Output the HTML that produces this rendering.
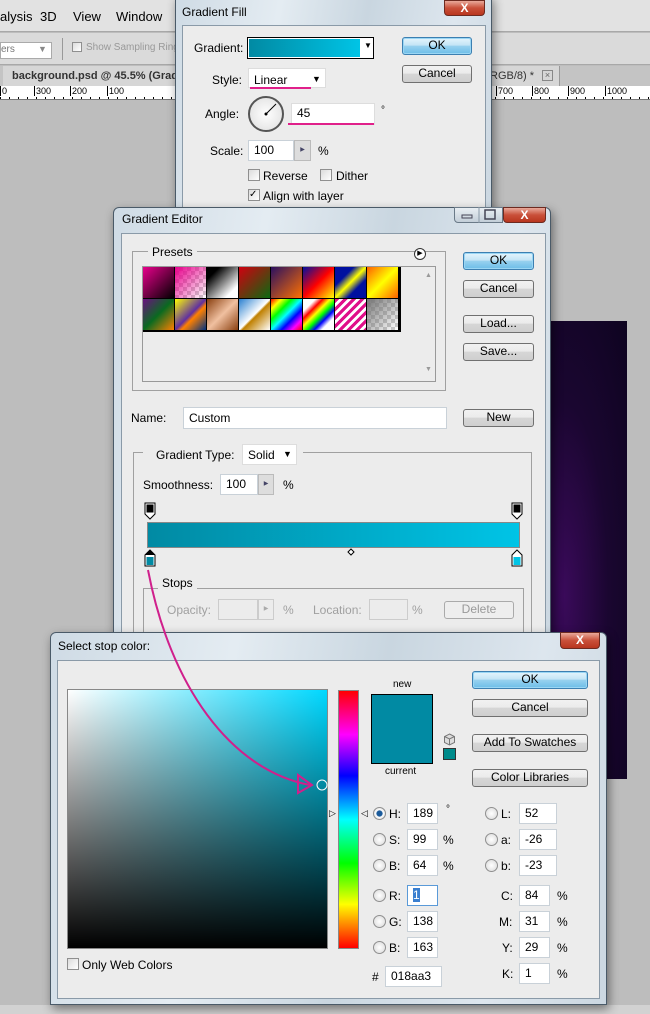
<!DOCTYPE html>
<html><head><meta charset="utf-8"><style>
*{box-sizing:border-box;margin:0;padding:0}
body{width:650px;height:1014px;overflow:hidden;position:relative;background:#bdbdbd;font-family:"Liberation Sans",sans-serif;font-size:12px;color:#000}
.a{position:absolute}
.t{position:absolute;white-space:nowrap}
.frame{position:absolute;background:linear-gradient(100deg,#cfdbe5 0%,#e4ecf2 30%,#c9d6e0 55%,#dde6ee 80%,#cbd7e1 100%);border:1px solid #4a5a68;border-radius:6px 6px 0 0;box-shadow:2px 4px 10px rgba(0,0,0,.45)}
.inner{position:absolute;background:#ececec;border:1px solid #8a9aa8}
.btn{position:absolute;border:1px solid #707070;border-radius:3px;background:linear-gradient(#f2f2f2 0%,#ebebeb 45%,#d6d6d6 50%,#cfcfcf 100%);text-align:center;font-size:12px;line-height:15px}
.ok{border-color:#3c7fb1;background:linear-gradient(#e5f4fc 0%,#c4e5f6 45%,#98d1ef 50%,#6cbde8 100%);box-shadow:0 0 0 1px #9ad6f4 inset}
.inp{position:absolute;background:#fff;border:1px solid #c9d1d8;padding-left:5px;line-height:18px}
.close{position:absolute;background:linear-gradient(#e9a99a,#c9503a 50%,#b8361f);border:1px solid #6d2a20;border-radius:0 0 4px 4px;color:#fff;text-align:center;font-weight:bold;font-size:12px}
.grp{position:absolute;border:1px solid #a0a0a0}
.cb{position:absolute;width:12px;height:12px;border:1px solid #8f8f8f;background:linear-gradient(135deg,#dcdcdc,#fff)}
.rad{position:absolute;width:13px;height:13px;border:1px solid #8f8f8f;border-radius:50%;background:radial-gradient(#fff,#d8d8d8)}
</style></head><body>
<div class="a" style="left:0;top:0;width:650px;height:32px;background:#e2e2e2;border-bottom:1px solid #a8a8a8"></div>
<div class="t" style="left:0;top:9px;font-size:13px">alysis</div>
<div class="t" style="left:40px;top:9px;font-size:13px">3D</div>
<div class="t" style="left:73px;top:9px;font-size:13px">View</div>
<div class="t" style="left:116px;top:9px;font-size:13px">Window</div>
<div class="a" style="left:0;top:33px;width:650px;height:32px;background:#dadada;border-bottom:1px solid #a8a8a8"></div>
<div class="a" style="left:0;top:42px;width:52px;height:17px;background:#fff;border:1px solid #aaa"></div>
<div class="t" style="left:1px;top:44px;font-size:10px;color:#777">ers</div>
<div class="t" style="left:38px;top:44px;font-size:9px;color:#888">▼</div>
<div class="a" style="left:62px;top:38px;width:1px;height:22px;background:#999"></div>
<div class="cb" style="left:72px;top:42px;width:10px;height:10px"></div>
<div class="t" style="left:86px;top:42px;font-size:10px;color:#999">Show Sampling Ring</div>
<div class="a" style="left:0;top:66px;width:650px;height:20px;background:#c4c4c4"></div>
<div class="a" style="left:3px;top:66px;width:557px;height:20px;background:#d6d6d6;border-right:1px solid #999"></div>
<div class="t" style="left:12px;top:70px;font-size:11px;font-weight:bold;color:#333">background.psd @ 45.5% (Grad</div>
<div class="t" style="left:490px;top:70px;font-size:11px;color:#333">RGB/8) *</div>
<div class="a" style="left:542px;top:70px;width:11px;height:11px;border:1px solid #888;font-size:9px;line-height:9px;text-align:center;color:#666">×</div>
<div class="a" style="left:0;top:86px;width:650px;height:14px;background:#fff;border-bottom:1px solid #777;background-image:repeating-linear-gradient(90deg,#000 0 1px,transparent 1px 9px);background-size:100% 3px;background-position:0 11px;background-repeat:no-repeat"></div>
<div class="t" style="left:0;top:86px;font-size:9px;border-left:1px solid #000;padding-left:1px">0</div>
<div class="t" style="left:34px;top:86px;font-size:9px;border-left:1px solid #000;padding-left:1px">300</div>
<div class="t" style="left:70px;top:86px;font-size:9px;border-left:1px solid #000;padding-left:1px">200</div>
<div class="t" style="left:107px;top:86px;font-size:9px;border-left:1px solid #000;padding-left:1px">100</div>
<div class="t" style="left:496px;top:86px;font-size:9px;border-left:1px solid #000;padding-left:1px">700</div>
<div class="t" style="left:532px;top:86px;font-size:9px;border-left:1px solid #000;padding-left:1px">800</div>
<div class="t" style="left:568px;top:86px;font-size:9px;border-left:1px solid #000;padding-left:1px">900</div>
<div class="t" style="left:605px;top:86px;font-size:9px;border-left:1px solid #000;padding-left:1px">1000</div>
<div class="a" style="left:537px;top:321px;width:90px;height:458px;background:radial-gradient(ellipse at 30% 60%,#3a0a5a,#1a0630 50%,#0e0420)"></div>
<div class="a" style="left:0;top:1005px;width:650px;height:9px;background:#d2d2d2"></div>

<div class="frame" style="left:175px;top:-6px;width:317px;height:220px"></div>
<div class="t" style="left:182px;top:5px;font-size:12px">Gradient Fill</div>
<div class="close" style="left:444px;top:0;width:41px;height:16px;line-height:14px">X</div>
<div class="inner" style="left:182px;top:25px;width:304px;height:190px"></div>
<div class="t" style="left:194px;top:41px">Gradient:</div>
<div class="a" style="left:247px;top:37px;width:127px;height:22px;border:1px solid #000;background:#fff"></div>
<div class="a" style="left:249px;top:39px;width:111px;height:18px;background:linear-gradient(90deg,#018aa3,#00c4e6)"></div>
<div class="t" style="left:364px;top:41px;font-size:8px">▼</div>
<div class="btn ok" style="left:402px;top:37px;width:70px;height:18px">OK</div>
<div class="btn" style="left:402px;top:65px;width:70px;height:18px">Cancel</div>
<div class="t" style="left:212px;top:73px">Style:</div>
<div class="a" style="left:248px;top:68px;width:78px;height:20px;background:#fff;border:1px solid #ddd"></div>
<div class="t" style="left:254px;top:73px">Linear</div>
<div class="t" style="left:312px;top:74px;font-size:9px">▼</div>
<div class="a" style="left:250px;top:87px;width:61px;height:2px;background:#e0208a"></div>
<div class="t" style="left:205px;top:107px">Angle:</div>
<div class="a" style="left:248px;top:96px;width:36px;height:36px;border-radius:50%;border:2px solid #555;background:radial-gradient(#fff,#ddd)"></div>
<svg class="a" style="left:248px;top:96px" width="36" height="36"><line x1="18" y1="18" x2="28" y2="8" stroke="#000" stroke-width="1"/><circle cx="18" cy="18" r="1.5"/></svg>
<div class="inp" style="left:291px;top:103px;width:84px;height:22px;border:1px solid #ddd">45</div>
<div class="a" style="left:288px;top:123px;width:86px;height:2px;background:#e0208a"></div>
<div class="t" style="left:381px;top:105px;font-size:10px">°</div>
<div class="t" style="left:210px;top:144px">Scale:</div>
<div class="inp" style="left:248px;top:140px;width:46px;height:21px">100</div>
<div class="a" style="left:294px;top:140px;width:17px;height:21px;border:1px solid #bbb;background:#ddd;font-size:6px;line-height:19px;text-align:center;color:#446">▶</div>
<div class="t" style="left:318px;top:144px">%</div>
<div class="cb" style="left:248px;top:169px"></div><div class="t" style="left:263px;top:169px">Reverse</div>
<div class="cb" style="left:320px;top:169px"></div><div class="t" style="left:336px;top:169px">Dither</div>
<div class="cb" style="left:248px;top:189px;font-size:10px;line-height:10px">✓</div><div class="t" style="left:263px;top:189px">Align with layer</div>

<div class="frame" style="left:113px;top:207px;width:438px;height:440px"></div>
<div class="t" style="left:122px;top:212px">Gradient Editor</div>
<div class="a" style="left:454px;top:207px;width:49px;height:16px;border:1px solid #6a7a88;border-radius:0 0 0 4px;background:linear-gradient(#e8eef3,#c3ced8)"></div>
<svg class="a" style="left:454px;top:207px" width="49" height="16"><rect x="8" y="8" width="10" height="3" fill="none" stroke="#445"/><line x1="25" y1="0" x2="25" y2="16" stroke="#8a9aa8"/><rect x="31" y="3" width="10" height="9" fill="none" stroke="#445" stroke-width="1.5"/></svg>
<div class="close" style="left:503px;top:207px;width:43px;height:16px;line-height:14px">X</div>
<div class="inner" style="left:121px;top:233px;width:425px;height:410px"></div>
<div class="grp" style="left:132px;top:251px;width:314px;height:140px"></div>
<div class="t" style="left:148px;top:245px;background:#ececec;padding:0 4px">Presets</div>
<div class="a" style="left:414px;top:248px;width:12px;height:12px;border:1px solid #333;border-radius:50%;background:#fff;font-size:7px;line-height:10px;text-align:center">▶</div>
<div class="a" style="left:142px;top:266px;width:294px;height:116px;background:#ececec;border:1px solid #999"></div>
<div class="t" style="left:425px;top:272px;font-size:7px;color:#999">▲</div>
<div class="t" style="left:425px;top:366px;font-size:7px;color:#999">▼</div>
<div class="a" style="left:143px;top:267px;width:258px;height:65px;background:#000;display:grid;grid-template-columns:repeat(8,31px);grid-template-rows:31px 31px;gap:1px">
<div style="background:linear-gradient(135deg,#e8008c,#000)"></div>
<div style="background:linear-gradient(135deg,#e8008c,transparent),repeating-conic-gradient(#ccc 0 25%,#fff 0 50%) 0 0/8px 8px"></div>
<div style="background:linear-gradient(135deg,#000 20%,#fff 80%)"></div>
<div style="background:linear-gradient(135deg,#d00010,#0a6a10)"></div>
<div style="background:linear-gradient(135deg,#2a1060,#ff7000)"></div>
<div style="background:linear-gradient(135deg,#0010a0,#f00 50%,#ff0)"></div>
<div style="background:linear-gradient(135deg,#0010a0 30%,#ff0 50%,#0010a0 70%)"></div>
<div style="background:linear-gradient(135deg,#ff6000,#ff0 50%,#ff6000)"></div>
<div style="background:linear-gradient(135deg,#6a1080,#0a6a20 50%,#ff8000)"></div>
<div style="background:linear-gradient(135deg,#ff0,#6030a0 50%,#ff8000 60%,#003080)"></div>
<div style="background:linear-gradient(135deg,#8a4010,#f0c0a0 50%,#8a4010)"></div>
<div style="background:linear-gradient(135deg,#2a80d0,#fff 50%,#c08000 55%,#fff)"></div>
<div style="background:linear-gradient(135deg,#f00,#ff0,#0f0,#0ff,#00f,#f0f,#f00)"></div>
<div style="background:linear-gradient(135deg,#fff 20%,#f00,#ff0,#0f0,#00f,#fff 80%)"></div>
<div style="background:repeating-linear-gradient(135deg,#e0108a 0 3px,#fff 3px 6px)"></div>
<div style="background:linear-gradient(135deg,#777,transparent),repeating-conic-gradient(#ccc 0 25%,#fff 0 50%) 0 0/8px 8px"></div>
</div>
<div class="btn ok" style="left:463px;top:252px;width:71px;height:18px">OK</div>
<div class="btn" style="left:463px;top:280px;width:71px;height:18px">Cancel</div>
<div class="btn" style="left:463px;top:315px;width:71px;height:18px">Load...</div>
<div class="btn" style="left:463px;top:343px;width:71px;height:18px">Save...</div>
<div class="t" style="left:131px;top:411px">Name:</div>
<div class="inp" style="left:183px;top:407px;width:264px;height:22px;line-height:20px">Custom</div>
<div class="btn" style="left:463px;top:409px;width:71px;height:18px">New</div>
<div class="grp" style="left:133px;top:452px;width:399px;height:200px;border-bottom:none"></div>
<div class="a" style="left:143px;top:445px;width:160px;height:20px;background:#ececec"></div>
<div class="t" style="left:156px;top:448px">Gradient Type:</div>
<div class="a" style="left:242px;top:444px;width:55px;height:21px;background:#fff;border:1px solid #ddd"></div>
<div class="t" style="left:248px;top:448px">Solid</div>
<div class="t" style="left:283px;top:449px;font-size:9px">▼</div>
<div class="t" style="left:143px;top:478px">Smoothness:</div>
<div class="inp" style="left:220px;top:474px;width:38px;height:21px">100</div>
<div class="a" style="left:258px;top:474px;width:16px;height:21px;border:1px solid #bbb;background:#ddd;font-size:6px;line-height:19px;text-align:center;color:#446">▶</div>
<div class="t" style="left:283px;top:478px">%</div>
<svg class="a" style="left:140px;top:502px" width="400" height="68">
<path d="M5 1h10v11l-5 5l-5-5z" fill="#fff" stroke="#000"/><rect x="6.5" y="2.5" width="7" height="8" fill="#000"/>
<path d="M372 1h10v11l-5 5l-5-5z" fill="#fff" stroke="#000"/><rect x="373.5" y="2.5" width="7" height="8" fill="#000"/>
<path d="M5 64v-11l5-5l5 5v11z" fill="#fff" stroke="#000"/><path d="M5 53l5-5l5 5z" fill="#000"/><rect x="6.5" y="55" width="7" height="8" fill="#018aa3"/>
<path d="M372 64v-11l5-5l5 5v11z" fill="#fff" stroke="#000"/><rect x="373.5" y="55" width="7" height="8" fill="#00c4e6"/>
<path d="M211 47l3 3l-3 3l-3-3z" fill="#fff" stroke="#000"/>
</svg>
<div class="a" style="left:147px;top:522px;width:373px;height:26px;border:1px solid #888;background:linear-gradient(90deg,#018aa3,#00c4e6)"></div>
<div class="grp" style="left:143px;top:588px;width:381px;height:60px;border-bottom:none"></div>
<div class="t" style="left:158px;top:576px;background:#ececec;padding:0 4px">Stops</div>
<div class="t" style="left:167px;top:603px;color:#a0a0a0">Opacity:</div>
<div class="a" style="left:218px;top:599px;width:40px;height:21px;border:1px solid #ccc"></div>
<div class="a" style="left:258px;top:599px;width:16px;height:21px;border:1px solid #ccc;font-size:6px;line-height:19px;text-align:center;color:#aaa">▶</div>
<div class="t" style="left:283px;top:603px;color:#a0a0a0">%</div>
<div class="t" style="left:313px;top:603px;color:#a0a0a0">Location:</div>
<div class="a" style="left:369px;top:599px;width:39px;height:21px;border:1px solid #ccc"></div>
<div class="t" style="left:412px;top:603px;color:#a0a0a0">%</div>
<div class="btn" style="left:444px;top:601px;width:70px;height:18px;color:#999;border-color:#aaa;background:#eee">Delete</div>

<div class="frame" style="left:50px;top:632px;width:557px;height:373px"></div>
<div class="t" style="left:58px;top:639px">Select stop color:</div>
<div class="close" style="left:560px;top:632px;width:40px;height:17px;line-height:15px">X</div>
<div class="inner" style="left:57px;top:660px;width:543px;height:339px"></div>
<div class="a" style="left:67px;top:689px;width:261px;height:260px;border:1px solid #888;background:linear-gradient(transparent,#000),linear-gradient(90deg,#fff,#00d8ff)"></div>
<div class="a" style="left:338px;top:690px;width:21px;height:259px;border:1px solid #888;background:linear-gradient(#f00,#f0f 17%,#00f 33%,#0ff 50%,#0f0 67%,#ff0 83%,#f00)"></div>
<div class="t" style="left:329px;top:808px;font-size:9px">▷</div>
<div class="t" style="left:361px;top:808px;font-size:9px">◁</div>
<div class="t" style="left:393px;top:679px;font-size:10px">new</div>
<div class="a" style="left:371px;top:694px;width:62px;height:70px;border:1px solid #000;background:#018aa3"></div>
<div class="t" style="left:385px;top:766px;font-size:10px">current</div>
<svg class="a" style="left:443px;top:733px" width="13" height="13"><path d="M6.5 1l5 2.5v6l-5 2.5l-5-2.5v-6z" fill="#ddd" stroke="#777"/><path d="M1.5 3.5l5 2.5l5-2.5M6.5 6v6" fill="none" stroke="#777"/></svg>
<div class="a" style="left:443px;top:748px;width:13px;height:12px;border:1px solid #333;background:#008b8b"></div>
<div class="btn ok" style="left:472px;top:671px;width:116px;height:18px">OK</div>
<div class="btn" style="left:472px;top:699px;width:116px;height:18px">Cancel</div>
<div class="btn" style="left:472px;top:734px;width:116px;height:18px">Add To Swatches</div>
<div class="btn" style="left:472px;top:769px;width:116px;height:18px">Color Libraries</div>
<svg class="a" style="left:50px;top:555px;overflow:visible" width="300" height="240"><path d="M98 15 C 120 130, 180 215, 260 230" fill="none" stroke="#d0208c" stroke-width="2"/><path d="M248 220 L262 230 L248 238 Z" fill="none" stroke="#d0208c" stroke-width="2"/><circle cx="272" cy="230" r="5" fill="none" stroke="#fff" stroke-width="1"/></svg>
<div class="rad" style="left:373px;top:807px;background:radial-gradient(#1a5a9a 35%,#fff 45%,#ccc)"></div>
<div class="t" style="left:389px;top:807px">H:</div><div class="inp" style="left:407px;top:803px;width:31px;height:21px">189</div>
<div class="t" style="left:446px;top:804px;font-size:10px">°</div>
<div class="rad" style="left:373px;top:833px"></div><div class="t" style="left:389px;top:833px">S:</div><div class="inp" style="left:407px;top:829px;width:31px;height:21px">99</div><div class="t" style="left:443px;top:833px">%</div>
<div class="rad" style="left:373px;top:859px"></div><div class="t" style="left:389px;top:859px">B:</div><div class="inp" style="left:407px;top:855px;width:31px;height:21px">64</div><div class="t" style="left:443px;top:859px">%</div>
<div class="rad" style="left:373px;top:889px"></div><div class="t" style="left:389px;top:889px">R:</div><div class="inp" style="left:407px;top:885px;width:31px;height:21px;border-color:#5a9ad8"><span style="background:#3a7fd0;color:#fff">1</span></div>
<div class="rad" style="left:373px;top:915px"></div><div class="t" style="left:389px;top:915px">G:</div><div class="inp" style="left:407px;top:911px;width:31px;height:21px">138</div>
<div class="rad" style="left:373px;top:941px"></div><div class="t" style="left:389px;top:941px">B:</div><div class="inp" style="left:407px;top:937px;width:31px;height:21px">163</div>
<div class="t" style="left:372px;top:970px">#</div><div class="inp" style="left:385px;top:966px;width:57px;height:21px">018aa3</div>
<div class="rad" style="left:485px;top:807px"></div><div class="t" style="left:501px;top:807px">L:</div><div class="inp" style="left:519px;top:803px;width:38px;height:21px">52</div>
<div class="rad" style="left:485px;top:833px"></div><div class="t" style="left:501px;top:833px">a:</div><div class="inp" style="left:519px;top:829px;width:38px;height:21px">-26</div>
<div class="rad" style="left:485px;top:859px"></div><div class="t" style="left:501px;top:859px">b:</div><div class="inp" style="left:519px;top:855px;width:38px;height:21px">-23</div>
<div class="t" style="left:501px;top:889px">C:</div><div class="inp" style="left:519px;top:885px;width:31px;height:21px">84</div><div class="t" style="left:557px;top:889px">%</div>
<div class="t" style="left:499px;top:915px">M:</div><div class="inp" style="left:519px;top:911px;width:31px;height:21px">31</div><div class="t" style="left:557px;top:915px">%</div>
<div class="t" style="left:502px;top:941px">Y:</div><div class="inp" style="left:519px;top:937px;width:31px;height:21px">29</div><div class="t" style="left:557px;top:941px">%</div>
<div class="t" style="left:502px;top:967px">K:</div><div class="inp" style="left:519px;top:963px;width:31px;height:21px">1</div><div class="t" style="left:557px;top:967px">%</div>
<div class="cb" style="left:67px;top:958px"></div><div class="t" style="left:82px;top:958px">Only Web Colors</div>
</body></html>
